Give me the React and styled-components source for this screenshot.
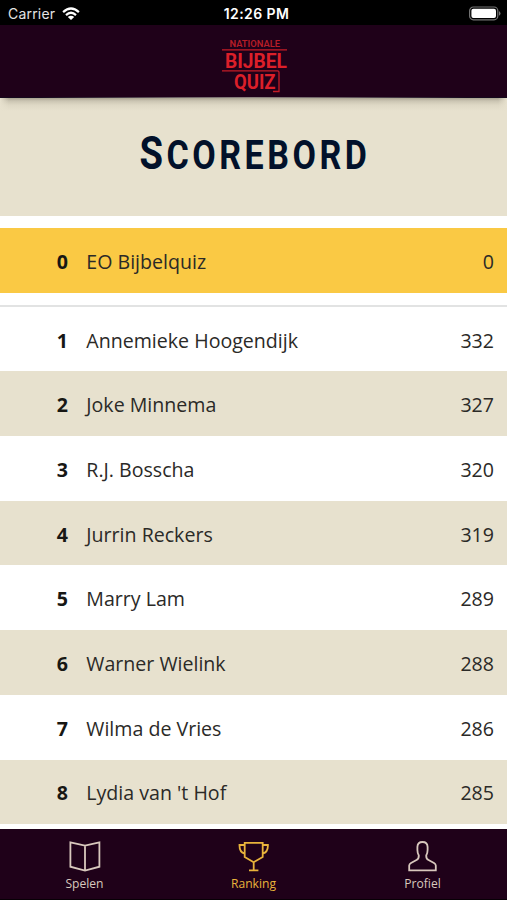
import React from "react";
import styled, { createGlobalStyle } from "styled-components";

const GlobalStyle = createGlobalStyle`
  * { box-sizing: border-box; }
  body { margin: 0; background: #fff; font-family: "Open Sans", "Noto Sans", sans-serif; }
`;

const Screen = styled.div`
  width: 507px;
  height: 900px;
  display: flex;
  flex-direction: column;
  overflow: hidden;
  background: #fff;
`;

const StatusBar = styled.div`
  flex: none;
  height: 25px;
  padding: 2px 6px 0 8px;
  display: grid;
  grid-template-columns: 1fr auto 1fr;
  align-items: center;
  background: #000;
  color: #e4e4e4;
  font-family: Inter, sans-serif;
`;

const Carrier = styled.span`
  display: flex;
  align-items: center;
  gap: 7px;
  font-size: 14px;
  letter-spacing: 0.2px;
  line-height: 20px;
`;

const Clock = styled.span`
  padding-left: 4px;
  font-size: 14px;
  font-weight: 600;
  letter-spacing: 0.4px;
  line-height: 20px;
  color: #fff;
`;

const BatteryIcon = styled.svg`
  justify-self: end;
`;

const Header = styled.header`
  flex: none;
  height: 73px;
  display: flex;
  justify-content: center;
  padding-top: 13px;
  background:
    linear-gradient(90deg, #15091d 8%, #6d6266 35%, #8d8480 50%, #6d6266 65%, #15091d 92%) bottom / 100% 1px no-repeat,
    #1f0119;
`;

const TitlePanel = styled.section`
  flex: none;
  height: 118px;
  display: flex;
  justify-content: center;
  padding: 30px 0 0 3px;
  background:
    linear-gradient(90deg, #e7e1ce, #e7e1ce00 9px, #e7e1ce00 498px, #e7e1ce),
    linear-gradient(#aaa491 0, #cbc5b3 3px, #ded8c5 7px, #e7e1ce 13px);
`;

const Title = styled.h1`
  margin: 0;
  color: #02112a;
  font-family: Roboto, sans-serif;
  font-size: 41px;
  font-weight: 700;
  line-height: 50px;
  letter-spacing: 4.2px;
  white-space: nowrap;
  transform: scaleX(0.83);

  &::first-letter { font-size: 46px; }
`;

const Own = styled.div`
  flex: none;
  padding: 12px 0;
  border-bottom: 2px solid #e2e3e3;
`;

const Row = styled.div`
  height: 64.7px;
  display: grid;
  grid-template-columns: 68px 1fr auto;
  align-items: center;
  padding: 3px 13px 0 0;
  background: ${(p) => p.$fill};
  color: #2b2a27;
  font-size: 19.6px;
  line-height: 28px;
`;

const Rank = styled.span`
  text-align: right;
  font-weight: 700;
  color: #171714;
`;

const Name = styled.span`
  padding-left: 18.3px;
  white-space: nowrap;
`;

const Score = styled.span`
  text-align: right;
`;

const List = styled.main`
  flex: 1;
  min-height: 0;
  overflow: hidden;
`;

const TabBar = styled.nav`
  flex: none;
  height: 71px;
  display: grid;
  grid-template-columns: repeat(3, 1fr);
  background: #1f0119;
  border-bottom: 1px solid #080006;
`;

const Tab = styled.div`
  display: flex;
  flex-direction: column;
  align-items: center;
  padding-top: 11px;
  color: ${(p) => (p.$active ? "#e8b33b" : "#d8c8bd")};
  font-size: 12.1px;
  line-height: 18px;

  svg { display: block; margin-bottom: 3px; }
`;

const WifiIcon = () => (
  <svg width="18" height="14" viewBox="0 0 18 14" fill="none" stroke="#fff" strokeWidth="2.2">
    <path d="M1.1 5.1Q9-2.1 16.9 5.1M4 8.1Q9 3.4 14 8.1" />
    <path d="M5.8 9.9Q9 7.4 12.2 9.9L9 13Z" fill="#fff" stroke="none" />
  </svg>
);

const Battery = () => (
  <BatteryIcon width="33" height="16" viewBox="0 0 33 16">
    <rect x="1.6" y="1" width="28.2" height="12.8" rx="3.8" fill="none" stroke="#747474" strokeWidth="1.2" />
    <rect x="3.4" y="2.8" width="24.6" height="9.2" rx="2" fill="#fff" />
    <path d="M31 5Q34 7.4 31 9.8Z" fill="#777" />
  </BatteryIcon>
);

const LogoSvg = styled.svg`
  overflow: visible;
`;

const Logo = () => (
  <LogoSvg width="68" height="56" viewBox="0 0 68 56" fill="#dc1f29" fontFamily="Roboto, sans-serif">
    <text x="9.5" y="8.8" fontSize="8.6" fontWeight="600" textLength="50.5" lengthAdjust="spacingAndGlyphs" fill="#b51d27">NATIONALE</text>
    <text x="5" y="30" fontSize="20.5" fontWeight="700" textLength="62" lengthAdjust="spacingAndGlyphs">BIJBEL</text>
    <text x="14" y="51" fontSize="20.5" fontWeight="700" textLength="41.5" lengthAdjust="spacingAndGlyphs">QUIZ</text>
    <path d="M2 11.8H67M2 32.8H57.5Q59 32.8 59 34.3V53.5H53" fill="none" stroke="#c41c27" strokeWidth="1.3" />
  </LogoSvg>
);

const icons = {
  book: <path d="M2.4 2.4L17 5.7L31.4 2.4V26.7L17 30.5L2.4 26.7ZM17 5.7V30.5" />,
  cup: <path d="M7.7 2.8H25.7V17L16.7 22.2L7.7 17ZM7.7 5H2.5Q2.3 12.5 7.7 13.5M25.7 5H30.9Q31.1 12.5 25.7 13.5M16.7 22.2V30.3M12 30.3H21.4" />,
  person: <path d="M3.2 30.3V25.5Q3.3 24 5 23L10.5 20Q13 18.6 12.8 15.5Q11.4 13 11.4 10V6.9Q11.6 2 16.5 2Q21.4 2 21.6 6.9V10Q21.6 13 20.2 15.5Q20 18.6 22.5 20L28 23Q29.7 24 29.8 25.5V30.3Z" />,
};

const TabIcon = ({ name }) => (
  <svg width="33" height="32" viewBox="0 0 33 32" fill="none" stroke="currentColor" strokeWidth="1.8">
    {icons[name]}
  </svg>
);

const players = [
  ["Annemieke Hoogendijk", 332],
  ["Joke Minnema", 327],
  ["R.J. Bosscha", 320],
  ["Jurrin Reckers", 319],
  ["Marry Lam", 289],
  ["Warner Wielink", 288],
  ["Wilma de Vries", 286],
  ["Lydia van 't Hof", 285],
];

const tabs = [
  ["Spelen", "book"],
  ["Ranking", "cup"],
  ["Profiel", "person"],
];

const Entry = ({ rank, name, score, fill }) => (
  <Row $fill={fill}>
    <Rank>{rank}</Rank>
    <Name>{name}</Name>
    <Score>{score}</Score>
  </Row>
);

export default function App() {
  return (
    <Screen>
      <GlobalStyle />
      <StatusBar>
        <Carrier>Carrier <WifiIcon /></Carrier>
        <Clock>12:26 PM</Clock>
        <Battery />
      </StatusBar>
      <Header><Logo /></Header>
      <TitlePanel><Title>SCOREBORD</Title></TitlePanel>
      <Own><Entry rank={0} name="EO Bijbelquiz" score={0} fill="#fac944" /></Own>
      <List>
        {players.map(([name, score], i) => (
          <Entry key={name} rank={i + 1} name={name} score={score} fill={i % 2 ? "#e7e1ce" : "#fff"} />
        ))}
      </List>
      <TabBar>
        {tabs.map(([label, icon]) => (
          <Tab key={label} $active={label === "Ranking"}>
            <TabIcon name={icon} />
            {label}
          </Tab>
        ))}
      </TabBar>
    </Screen>
  );
}
